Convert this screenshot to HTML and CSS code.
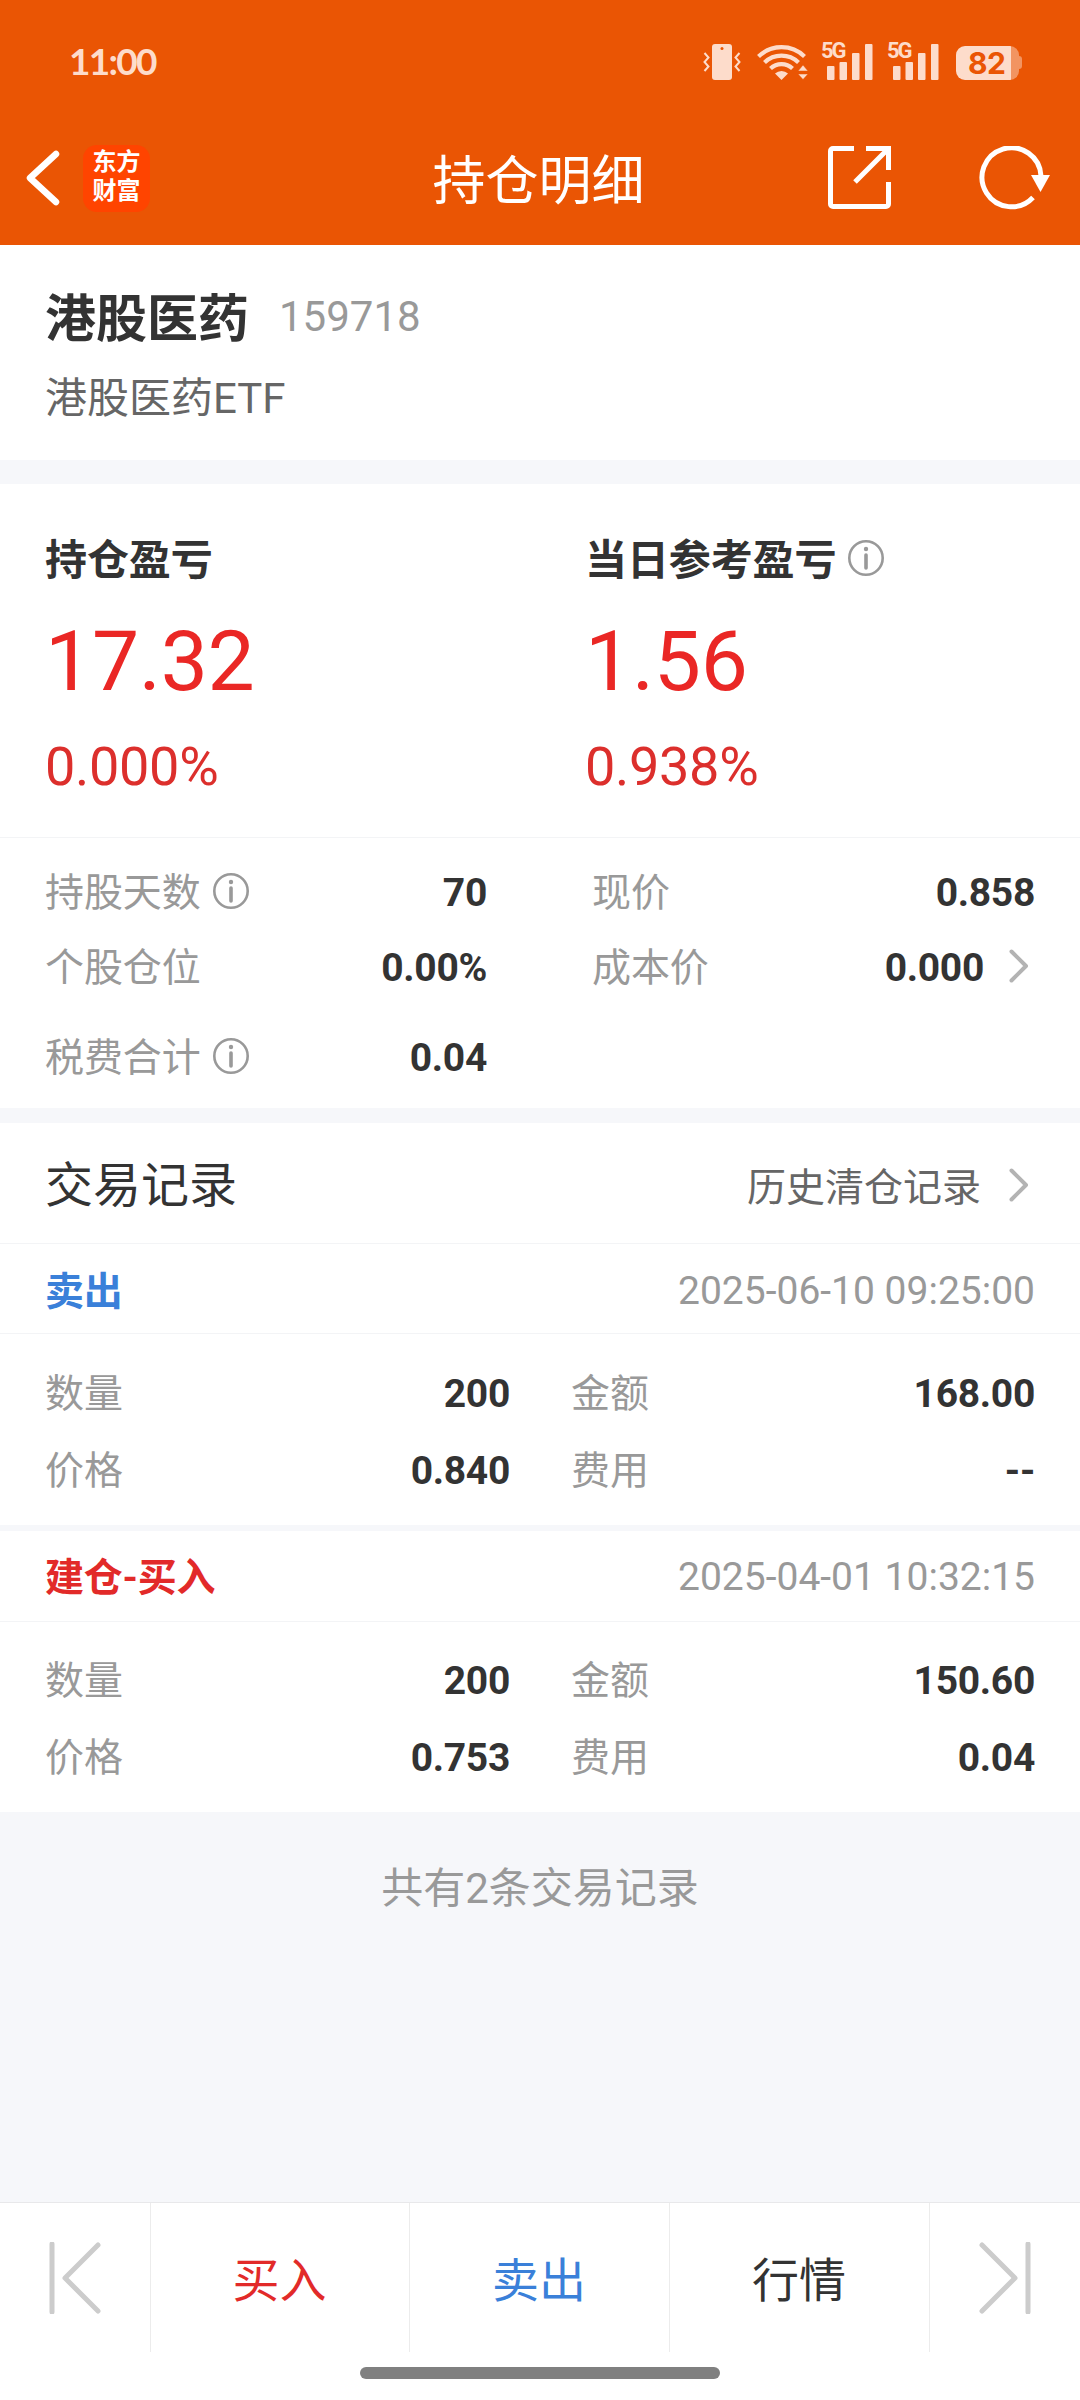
FILE: index.html
```html
<!DOCTYPE html>
<html lang="zh-CN">

<head>
    <meta charset="UTF-8">
    <meta name="viewport" content="width=device-width, initial-scale=1.0">
    <title>持仓明细</title>
    <link rel="stylesheet" href="styles.css">
</head>

<body>

    <header class="header">
        <!-- 状态栏 -->
        <div class="status-bar">
            <span class="time">11:00</span>
            <div class="status-icons">
                <svg class="icon-vibrate" width="38" height="36" viewBox="0 0 38 36">
                    <path d="M9 0h14a3 3 0 0 1 3 3v30a3 3 0 0 1-3 3h-14a3 3 0 0 1-3-3v-30a3 3 0 0 1 3-3z" transform="translate(3)" fill="currentColor" />
                    <circle cx="19" cy="4.500" r="1.500" fill="#ea5504" />
                    <path d="M1.500 9l4 4.500-4 4.500 4 4.500-4 4.500M36.500 9l-4 4.500 4 4.500-4 4.500 4 4.500" fill="none" stroke="currentColor" stroke-width="2" />
                </svg>
                <svg class="icon-wifi" width="51" height="36" viewBox="0 0 51 36">
                    <g fill="none" stroke="currentColor" stroke-width="4.200">
                        <path d="M1.500 12.500a33 33 0 0 1 46 0" />
                        <path d="M7.500 18.500a24.500 24.500 0 0 1 34 0" />
                        <path d="M13.500 24.500a16 16 0 0 1 22 0" />
                    </g>
                    <path d="M24.500 36l-6.500-6.500a9.500 9.500 0 0 1 13 0z" fill="currentColor" />
                    <path d="M41 27l5-6 5 6zM41 30h10l-5 5.500z" fill="currentColor" stroke="#ea5504" stroke-width="0.500" />
                </svg>
                <div class="signal">
                    <span class="signal-type">5G</span>
                    <svg width="46" height="36" viewBox="0 0 46 36" fill="currentColor">
                        <rect x="0" y="22" width="7.500" height="14" rx="1" />
                        <rect x="12.500" y="18" width="7.500" height="18" rx="1" />
                        <rect x="25" y="9" width="7.500" height="27" rx="1" />
                        <rect x="38" y="0" width="7.500" height="36" rx="1" />
                    </svg>
                </div>
                <div class="signal">
                    <span class="signal-type">5G</span>
                    <svg width="46" height="36" viewBox="0 0 46 36" fill="currentColor">
                        <rect x="0" y="22" width="7.500" height="14" rx="1" />
                        <rect x="12.500" y="18" width="7.500" height="18" rx="1" />
                        <rect x="25" y="9" width="7.500" height="27" rx="1" />
                        <rect x="38" y="0" width="7.500" height="36" rx="1" />
                    </svg>
                </div>
                <div class="battery">82</div>
            </div>
        </div>

        <!-- 标题栏 -->
        <div class="nav-bar">
            <div class="nav-left">
                <svg width="34" height="56" viewBox="0 0 34 56">
                    <path d="M30 4L4 28L30 52" fill="none" stroke="#fff" stroke-width="6.500" stroke-linecap="round" stroke-linejoin="round" />
                </svg>
                <div class="logo">东方<br>财富</div>
            </div>
            <h1 class="title">持仓明细</h1>
            <div class="nav-right">
                <svg width="63" height="63" viewBox="0 0 63 63">
                    <path d="M26 2.500H5a2.500 2.500 0 0 0-2.500 2.500v53a2.500 2.500 0 0 0 2.500 2.500h53a2.500 2.500 0 0 0 2.500-2.500V36M38 2.500h22.500V24M60 3L27 36" fill="none" stroke="#fff" stroke-width="5" />
                </svg>
                <svg width="72" height="64" viewBox="0 0 72 64">
                    <path d="M62 30A29.500 29.500 0 1 0 54 51.500" fill="none" stroke="#fff" stroke-width="5" />
                    <path d="M52 29h19l-9.500 17z" fill="#fff" />
                </svg>
            </div>
        </div>
    </header>

    <!-- 股票信息 -->
    <section class="stock">
        <div class="stock-line">
            <span class="stock-name">港股医药</span>
            <span class="stock-code">159718</span>
        </div>
        <div class="stock-full">港股医药ETF</div>
    </section>

    <!-- 盈亏 -->
    <section class="profit">
        <div class="profit-col">
            <div class="profit-label">持仓盈亏</div>
            <div class="profit-value">17.32</div>
            <div class="profit-rate">0.000%</div>
        </div>
        <div class="profit-col">
            <div class="profit-label">当日参考盈亏
                <svg class="info" viewBox="0 0 36 36"><circle cx="18" cy="18" r="16.700" /><path d="M18 15v13" /><circle class="dot" cx="18" cy="9" r="2.200" /></svg>
            </div>
            <div class="profit-value">1.56</div>
            <div class="profit-rate">0.938%</div>
        </div>
    </section>

    <section class="detail">
        <div class="detail-row">
            <div class="cell">
                <span class="label">持股天数</span>
                <svg class="info" viewBox="0 0 36 36"><circle cx="18" cy="18" r="16.700" /><path d="M18 15v13" /><circle class="dot" cx="18" cy="9" r="2.200" /></svg>
                <span class="value">70</span>
            </div>
            <div class="cell">
                <span class="label">现价</span>
                <span class="value">0.858</span>
            </div>
        </div>
        <div class="detail-row">
            <div class="cell">
                <span class="label">个股仓位</span>
                <span class="value">0.00%</span>
            </div>
            <div class="cell">
                <span class="label">成本价</span>
                <span class="value">0.000</span>
                <svg class="arrow" viewBox="0 0 20 34"><path d="M2.500 2.500L17 17L2.500 31.500" /></svg>
            </div>
        </div>
        <div class="detail-row last">
            <div class="cell">
                <span class="label">税费合计</span>
                <svg class="info" viewBox="0 0 36 36"><circle cx="18" cy="18" r="16.700" /><path d="M18 15v13" /><circle class="dot" cx="18" cy="9" r="2.200" /></svg>
                <span class="value">0.04</span>
            </div>
        </div>
    </section>

    <!-- 交易记录 -->
    <section class="records">
        <div class="records-head">
            <h2>交易记录</h2>
            <a class="history">历史清仓记录
                <svg class="arrow" viewBox="0 0 20 34"><path d="M2.500 2.500L17 17L2.500 31.500" /></svg>
            </a>
        </div>

        <div class="record">
            <div class="record-head">
                <span class="type sell">卖出</span>
                <span class="date">2025-06-10 09:25:00</span>
            </div>
            <div class="record-body">
                <div class="record-row">
                    <div class="cell"><span class="label">数量</span><span class="value">200</span></div>
                    <div class="cell"><span class="label">金额</span><span class="value">168.00</span></div>
                </div>
                <div class="record-row">
                    <div class="cell"><span class="label">价格</span><span class="value">0.840</span></div>
                    <div class="cell"><span class="label">费用</span><span class="value">--</span></div>
                </div>
            </div>
        </div>

        <div class="record">
            <div class="record-head">
                <span class="type buy">建仓-买入</span>
                <span class="date">2025-04-01 10:32:15</span>
            </div>
            <div class="record-body">
                <div class="record-row">
                    <div class="cell"><span class="label">数量</span><span class="value">200</span></div>
                    <div class="cell"><span class="label">金额</span><span class="value">150.60</span></div>
                </div>
                <div class="record-row">
                    <div class="cell"><span class="label">价格</span><span class="value">0.753</span></div>
                    <div class="cell"><span class="label">费用</span><span class="value">0.04</span></div>
                </div>
            </div>
        </div>
    </section>

    <p class="total">共有2条交易记录</p>

    <!-- 底部操作栏 -->
    <footer class="footer">
        <div class="tabs">
            <div class="tab step">
                <svg width="52" height="72" viewBox="0 0 52 72"><path d="M3 2v68M49 3L16 36L49 69" /></svg>
            </div>
            <div class="tab buy">买入</div>
            <div class="tab sell">卖出</div>
            <div class="tab">行情</div>
            <div class="tab step">
                <svg width="52" height="72" viewBox="0 0 52 72"><path d="M49 2v68M3 3L36 36L3 69" /></svg>
            </div>
        </div>
        <div class="home-bar"></div>
    </footer>

</body>

</html>
```
FILE: styles.css
```css
* {
    margin: 0;
    padding: 0;
    box-sizing: border-box;
}

body {
    display: flex;
    flex-direction: column;
    width: 1080px;
    height: 2400px;
    background: #f6f7fa;
    color: #333;
    font-family: Roboto, "Noto Sans CJK SC", sans-serif;
    font-size: 39px;
    line-height: 1.2;
}

svg {
    display: block;
    flex-shrink: 0;
}

/* 顶部 */
.header {
    height: 245px;
    background: #ea5504;
    color: #fff;
}

.status-bar {
    display: flex;
    justify-content: space-between;
    height: 120px;
    padding: 0 58px 0 69px;
    color: #fddccb;
}

.time {
    margin-top: 39px;
    font-family: Lato, sans-serif;
    font-size: 37px;
    font-weight: 700;
    letter-spacing: -1.7px;
}

.status-icons {
    display: flex;
    align-items: flex-start;
    padding-top: 44px;
}

.icon-wifi {
    margin-left: 16px;
}

.signal {
    position: relative;
    margin-left: 20px;
}

.icon-wifi + .signal {
    margin-left: 19px;
}

.signal-type {
    position: absolute;
    left: -6px;
    top: -6px;
    font-size: 22px;
    font-weight: 700;
    letter-spacing: -2px;
}

/* 电池 */
.battery {
    position: relative;
    width: 63px;
    height: 34px;
    margin: 2px 3px 0 17px;
    border-radius: 9px;
    background: linear-gradient(to right, #fddccb 55px, #f29461 55px);
    color: #ea5504;
    font-family: Inter, sans-serif;
    font-size: 30px;
    font-weight: 700;
    line-height: 35px;
    letter-spacing: -0.5px;
    padding-left: 12px;
}

.battery::after {
    content: "";
    position: absolute;
    right: -3px;
    top: 10px;
    width: 3px;
    height: 13px;
    border-radius: 0 3px 3px 0;
    background: #f29461;
}

.nav-bar {
    display: grid;
    grid-template-columns: 1fr auto 1fr;
    align-items: center;
    height: 116px;
    padding: 0 29px 0 26px;
}

.nav-left {
    display: flex;
    align-items: center;
    gap: 23px;
}

.logo {
    width: 67px;
    height: 67px;
    padding-top: 3px;
    border-radius: 14px;
    background: #ff4400;
    font-size: 24px;
    font-weight: 700;
    line-height: 29px;
    text-align: center;
}

.title {
    padding-top: 9px;
    font-size: 53px;
    font-weight: 400;
}

.nav-right {
    display: flex;
    justify-content: flex-end;
    gap: 88px;
}

/* 股票名称 */
.stock {
    height: 215px;
    padding: 41px 45px 0;
    background: #fff;
}

.stock-line {
    display: flex;
    align-items: center;
    gap: 30px;
    height: 62px;
}

.stock-name {
    padding-top: 5px;
    font-size: 51px;
    font-weight: 700;
}

.stock-code {
    color: #999;
    font-size: 42px;
}

.stock-full {
    margin-top: 26px;
    color: #666;
    font-size: 42px;
}

/* 盈亏 */
.profit {
    display: grid;
    grid-template-columns: 1fr 1fr;
    height: 354px;
    margin-top: 24px;
    padding-top: 52px;
    border-bottom: 1px solid #f3f4f6;
    background: #fff;
}

.profit-col {
    padding-left: 45px;
}

.profit-label {
    display: flex;
    align-items: center;
    gap: 12px;
    height: 50px;
    font-size: 42px;
    font-weight: 700;
    letter-spacing: -0.1px;
}

.profit-label .info {
    margin-top: -6px;
}

.profit-value {
    margin-top: 26px;
    color: #ea2725;
    font-size: 84px;
    letter-spacing: -0.3px;
}

.profit-rate {
    margin-top: 22px;
    color: #dc2f2c;
    font-size: 54px;
    letter-spacing: -0.3px;
}

.info {
    width: 36px;
    height: 36px;
    fill: none;
    stroke: #999;
    stroke-width: 2.600;
    stroke-linecap: round;
}

.info path {
    stroke-width: 3.600;
}

.info .dot {
    fill: #999;
    stroke: none;
}

.arrow {
    width: 20px;
    height: 34px;
    fill: none;
    stroke: #b3b3b3;
    stroke-width: 4;
    stroke-linecap: round;
    stroke-linejoin: round;
}

/* 持仓明细 */
.detail {
    height: 270px;
    padding: 18px 45px 0;
    background: #fff;
}

.detail-row {
    display: grid;
    grid-template-columns: 442px 443px;
    justify-content: space-between;
    height: 75px;
}

.detail-row.last {
    margin-top: 15px;
}

.cell {
    display: flex;
    align-items: center;
}

.label {
    color: #999;
    letter-spacing: -0.1px;
}

.cell .info {
    margin: -5px 0 0 12px;
}

.value {
    margin-left: auto;
    font-weight: 700;
    letter-spacing: -0.3px;
}

.cell .arrow {
    margin: -6px 6px 0 25px;
}

/* 交易记录 */
.records {
    margin-top: 15px;
}

.records-head {
    display: flex;
    align-items: center;
    justify-content: space-between;
    height: 120px;
    padding: 5px 51px 0 45px;
    background: #fff;
}

.records-head h2 {
    font-size: 48px;
    font-weight: 400;
}

.history {
    display: flex;
    align-items: center;
    gap: 28px;
    margin-top: 6px;
    color: #666;
}

.history .arrow {
    margin-top: -6px;
}

.record {
    height: 288px;
    border-bottom: 6px solid #f6f7fa;
    background: #fff;
}

.record:last-child {
    height: 281px;
    border-bottom: none;
}

.record-head {
    display: flex;
    align-items: center;
    justify-content: space-between;
    height: 91px;
    padding: 5px 45px 0;
    border-top: 1px solid #f3f4f6;
    border-bottom: 1px solid #f3f4f6;
}

.record:last-child .record-head {
    padding-top: 3px;
    border-top: none;
}

.type {
    padding-top: 2px;
    font-weight: 700;
    letter-spacing: -0.2px;
}

.date {
    color: #999;
}

.sell {
    color: #3a80d9;
}

.buy {
    color: #e22a29;
}

.record-body {
    padding: 22px 45px 0;
}

.record:last-child .record-body {
    padding-top: 21px;
}

.record-row {
    display: grid;
    grid-template-columns: 465px 464px;
    justify-content: space-between;
    height: 77px;
}

.total {
    margin-top: 52px;
    color: #999;
    font-size: 42px;
    text-align: center;
}

/* 底部 */
.footer {
    height: 198px;
    margin-top: auto;
    border-top: 1px solid #e8e8ea;
    background: #fff;
}

.tabs {
    display: grid;
    grid-template-columns: 151px 259px 260px 260px 150px;
    height: 149px;
}

.tab {
    display: flex;
    align-items: center;
    justify-content: center;
    padding: 7px 1px 0 0;
    border-right: 1px solid #ececec;
    font-size: 47px;
}

.tab:last-child {
    border-right: none;
}

.tab.step {
    padding: 0;
    fill: none;
    stroke: #ccc;
    stroke-width: 5;
    stroke-linecap: round;
    stroke-linejoin: round;
}

.home-bar {
    width: 360px;
    height: 12px;
    margin: 15px auto 0;
    border-radius: 6px;
    background: #808080;
}
```
